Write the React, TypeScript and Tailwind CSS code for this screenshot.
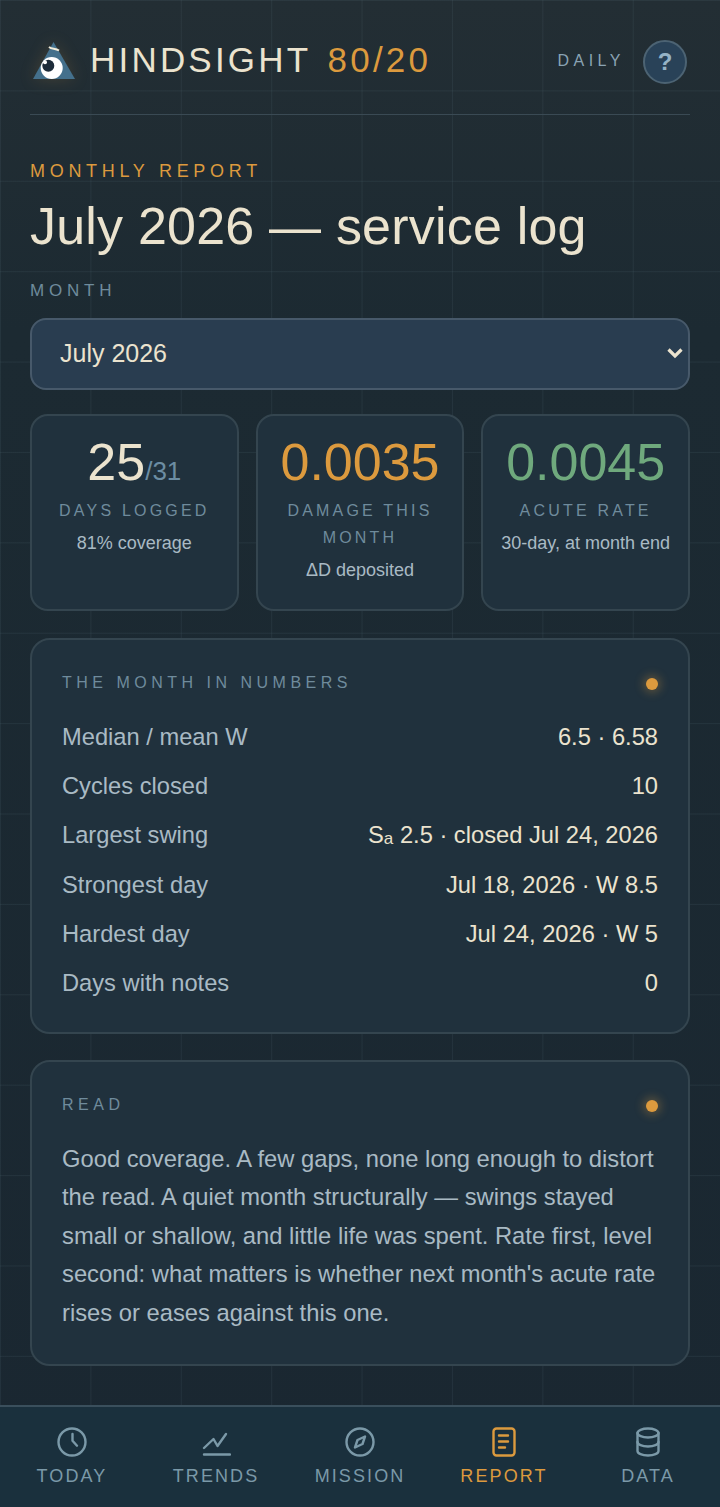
const ROWS: [React.ReactNode, React.ReactNode][] = [
  ["Median / mean W", "6.5 · 6.58"],
  ["Cycles closed", "10"],
  ["Largest swing", <>S<span className="align-[-1px] text-[17px] leading-none">a</span> 2.5 · closed Jul 24, 2026</>],
  ["Strongest day", "Jul 18, 2026 · W 8.5"],
  ["Hardest day", "Jul 24, 2026 · W 5"],
  ["Days with notes", "0"],
];

const NAV = [
  {
    label: "TODAY",
    icon: (
      <>
        <circle cx="15" cy="15" r="13.5" />
        <path d="M15.5 7V13.7L20 18.7" />
      </>
    ),
  },
  {
    label: "TRENDS",
    icon: (
      <>
        <path d="M3 21L12.5 12L16.5 19L25 7" />
        <path d="M3 27.5H29" />
      </>
    ),
  },
  {
    label: "MISSION",
    icon: (
      <>
        <circle cx="15" cy="15" r="13.5" />
        <path d="M20 9.5L17.5 17L10 20.5L12.5 13Z" />
      </>
    ),
  },
  {
    label: "REPORT",
    icon: (
      <>
        <rect x="4.5" y="1.5" width="21" height="27" rx="3" />
        <path d="M10 8.5H19M10 14.5H19M10 20.5H16" />
      </>
    ),
  },
  {
    label: "DATA",
    icon: (
      <>
        <ellipse cx="15" cy="6" rx="10.5" ry="4.5" />
        <path d="M4.5 6V24C4.5 26.5 9 28.5 15 28.5C21 28.5 25.5 26.5 25.5 24V6" />
        <path d="M4.5 15C4.5 17.5 9 19.5 15 19.5C21 19.5 25.5 17.5 25.5 15" />
      </>
    ),
  },
];

function Logo() {
  return (
    <svg width="44" height="40" viewBox="0 0 44 40" className="shrink-0 drop-shadow-[0_0_8px_rgba(223,154,60,0.18)]">
      <path d="M21.5 2L43 39H1Z" fill="#44708c" />
      <path d="M17 7C20 9.5 23 8 27 10.5" fill="none" stroke="#f3ecd9" strokeWidth="2" />
      <circle cx="19.7" cy="28" r="11" fill="#fff" />
      <circle cx="16.3" cy="25.7" r="6" fill="#1d2c3a" />
      <circle cx="13" cy="22.3" r="2" fill="#fff" />
    </svg>
  );
}

function StatCard({ value, unit, label, note, color }: { value: string; unit?: string; label: string; note: string; color: string }) {
  return (
    <div className="rounded-[18px] border-2 border-[#34454f] bg-[#20313d] px-2 pt-[17px] pb-[25px] text-center">
      <div className={"text-[52px] leading-[58px] " + color}>
        {value}
        {unit && <span className="text-[26px] leading-none text-[#6c8da3]">{unit}</span>}
      </div>
      <div className="mt-[6px] text-[16px] leading-[27px] tracking-[3.2px] text-[#6f8b9c]">{label}</div>
      <div className="mt-[6px] text-[18px] leading-[27px] text-[#a9bac4]">{note}</div>
    </div>
  );
}

function PanelHead({ title }: { title: string }) {
  return (
    <div className="flex items-center justify-between">
      <span className="text-[16px] tracking-[4.5px] text-[#6f8b9c]">{title}</span>
      <span className="mt-[2px] size-3 rounded-full bg-[#dc9a3e] shadow-[0_0_10px_3px_rgba(223,154,60,0.3)]" />
    </div>
  );
}

export default function App() {
  return (
    <div
      className="flex min-h-[1507px] flex-col bg-[linear-gradient(rgba(120,150,165,0.1)_1px,transparent_1px),linear-gradient(90deg,rgba(120,150,165,0.1)_1px,transparent_1px),linear-gradient(#232e34,#1c2a32_22%,#1a2731)] bg-[size:90.4px_90.4px,90.4px_90.4px,100%_100%] text-[#ebe3ce]"
      style={{ fontFamily: '"Liberation Sans", Arial, sans-serif' }}
    >
      <main className="flex-1 px-[30px]">
        <header className="flex h-[115px] items-center justify-between border-b border-[#3a4a54] pt-[6px]">
          <div className="flex items-center gap-[14px] pl-[2px]">
            <Logo />
            <div className="text-[35px] tracking-[3.2px]">
              HINDSIGHT <span className="ml-[4px] text-[#dc9a3e]">80/20</span>
            </div>
          </div>
          <div className="flex items-center gap-[18px] pt-[2px] pr-[3px]">
            <span className="text-[16px] tracking-[4.5px] text-[#8aa3b3]">DAILY</span>
            <div className="mt-[2px] flex size-[44px] items-center justify-center rounded-full border-2 border-[#4c6373] bg-[#294258] text-[24px] font-bold text-[#95b3c6]">?</div>
          </div>
        </header>

        <div className="mt-[45px] text-[18px] leading-[22px] tracking-[4.7px] text-[#dc9a3e]">MONTHLY REPORT</div>
        <h1 className="mt-[8px] text-[52px] leading-[72px] tracking-[0.2px]">July 2026 — service log</h1>
        <div className="mt-[17px] text-[17px] leading-[24px] tracking-[4.8px] text-[#6f8b9c]">MONTH</div>

        <div className="relative mt-[15px]">
          <select className="h-[72px] w-full appearance-none rounded-[16px] border-2 border-[#47596a] bg-[#293d50] pl-[28px] text-[25px] text-[#ebe3ce]">
            <option>July 2026</option>
          </select>
          <svg width="16" height="12" viewBox="0 0 16 12" className="pointer-events-none absolute top-[29px] right-[7px]" fill="none" stroke="#ebe3ce" strokeWidth="3.2">
            <path d="M1.5 2.5L8 9L14.5 2.5" />
          </svg>
        </div>

        <div className="mt-6 grid grid-cols-3 gap-[17px]">
          <StatCard value="25" unit="/31" label="DAYS LOGGED" note="81% coverage" color="text-[#ebe3ce]" />
          <StatCard value="0.0035" label="DAMAGE THIS MONTH" note="ΔD deposited" color="text-[#dc9a3e]" />
          <StatCard value="0.0045" label="ACUTE RATE" note="30-day, at month end" color="text-[#6fa97d]" />
        </div>

        <section className="mt-[27px] rounded-[20px] border-2 border-[#34454f] bg-[#20313d] px-[30px] pt-[31px] pb-[34px]">
          <PanelHead title="THE MONTH IN NUMBERS" />
          <div className="mt-[28px] flex flex-col gap-[20.2px]">
            {ROWS.map(([k, v], i) => (
              <div key={i} className="flex items-center justify-between text-[23.7px] leading-[29px]">
                <span className="text-[#a9bac4]">{k}</span>
                <span>{v}</span>
              </div>
            ))}
          </div>
        </section>

        <section className="mt-[26px] rounded-[20px] border-2 border-[#34454f] bg-[#20313d] px-[30px] pt-[31px] pb-[32px]">
          <PanelHead title="READ" />
          <p className="mt-[23px] text-[23.76px] leading-[38.5px] text-[#a9bac4]">
            Good coverage. A few gaps, none long enough to distort the read. A quiet month structurally — swings stayed small or shallow, and little life was spent. Rate first, level second: what matters is whether next month's acute rate rises or eases against this one.
          </p>
        </section>
      </main>

      <nav className="grid h-[102px] grid-cols-5 border-t-2 border-[#3a4f5c] bg-[#1a303d] pt-[20px]">
        {NAV.map((n) => {
          const active = n.label === "REPORT";
          return (
            <div key={n.label} className={"flex flex-col items-center " + (active ? "text-[#dc9a3e]" : "text-[#7b99a8]")}>
              <svg width="30" height="30" viewBox="0 0 30 30" fill="none" stroke="currentColor" strokeWidth="2.4" strokeLinecap="round" strokeLinejoin="round">
                {n.icon}
              </svg>
              <span className="mt-[8px] text-[18px] leading-[22px] tracking-[2.1px]">{n.label}</span>
            </div>
          );
        })}
      </nav>
    </div>
  );
}
